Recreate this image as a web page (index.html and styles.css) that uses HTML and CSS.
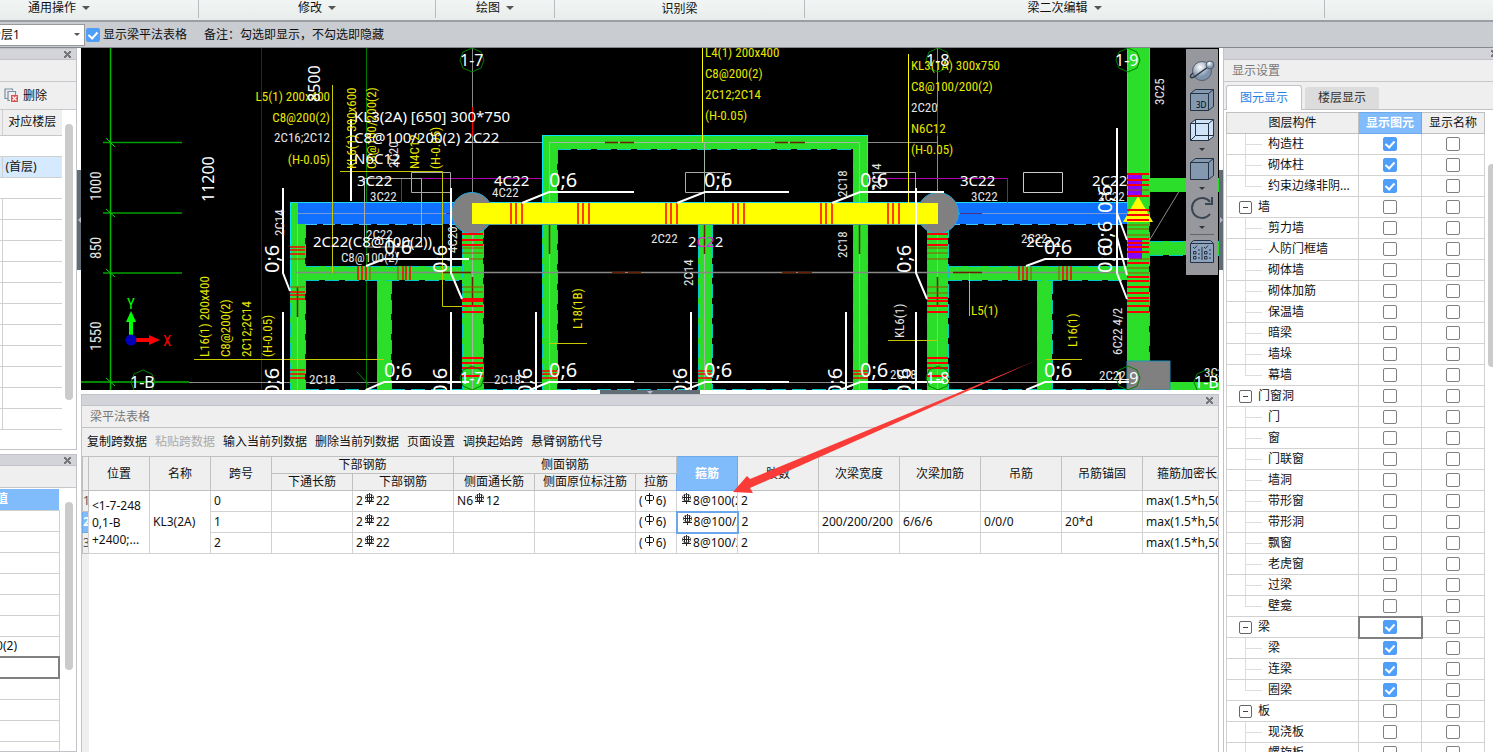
FILE: index.html
```html
<!DOCTYPE html>
<html lang="zh-CN">
<head>
  <meta charset="UTF-8" />
  <meta name="viewport" content="width=device-width, initial-scale=1.0"/>
  <title>梁平法表格</title>
  <link rel="stylesheet" href="styles.css">
</head>
<body>
  <svg class="defs" aria-hidden="true">
    <symbol id="rebar3" viewBox="0 0 11 11"><path d="M5.500 0V11M3.500 1V8M7.500 1V8M1 4.500H10M1 8.500H10" fill="none" stroke="#222"/><path d="M3.500 1.500H7.500L9.500 3V6L7.500 7.500H3.500L1.500 6V3Z" fill="none" stroke="#555" stroke-width="0.800"/></symbol>
    <symbol id="rebar1" viewBox="0 0 11 11"><path d="M5.500 0V11M2.500 2.500H8.500L9.500 3.500V6.500L8.500 7.500H2.500L1.500 6.500V3.500Z" fill="none" stroke="#111"/></symbol>
  </svg>

  <nav class="ribbon">
    <button class="group g-common">通用操作 <i class="caret"></i></button>
    <button class="group g-edit">修改 <i class="caret"></i></button>
    <button class="group g-draw">绘图 <i class="caret"></i></button>
    <button class="group g-detect">识别梁</button>
    <button class="group g-beam">梁二次编辑 <i class="caret"></i></button>
  </nav>

  <div class="options">
    <div class="layer-box">
      <select class="layer" aria-label="分层"><option>分层1</option></select>
      <i class="caret"></i>
    </div>
    <label class="show-table"><input type="checkbox" class="check" checked> 显示梁平法表格</label>
    <span>备注：勾选即显示，不勾选即隐藏</span>
  </div>

  <main class="workspace">
    <aside class="left">
      <section class="dock dock-floor">
        <div class="strip"><button class="close" aria-label="关闭"></button></div>
        <div class="dock-title"></div>
        <div class="dock-tools">
          <button class="delete">
            <svg width="15" height="15" viewBox="0 0 15 15"><path d="M3.500 10.500H1V1H8.500V2.500M6 12.500H4V3.500H11.500V7" fill="none" stroke="#7c8ea0" stroke-width="1.200"/><path d="M7 7H14V14H7Z" fill="#d9534f"/><path d="M8.500 8.500L12.500 12.500M12.500 8.500L8.500 12.500" stroke="#fff" stroke-width="1.200"/></svg>
            删除
          </button>
        </div>
        <div class="list">
          <table class="floors">
            <thead><tr><th></th><th>对应楼层</th></tr></thead>
            <tbody id="floors"></tbody>
          </table>
          <div class="scroll floor-scroll"></div>
        </div>
      </section>
      <section class="dock dock-props">
        <div class="strip"><button class="close" aria-label="关闭"></button></div>
        <div class="dock-title"></div>
        <div class="list">
          <table class="props">
            <thead><tr><th><div class="tail">值</div></th></tr></thead>
            <tbody id="props"></tbody>
          </table>
          <div class="scroll prop-scroll"></div>
        </div>
      </section>
    </aside>

    <div class="split split-left"><div class="grip"><i></i></div></div>

    <section class="center">
      <div class="view">
        <svg class="cad" viewBox="81 48 1138 342" preserveAspectRatio="xMinYMin slice">
          <!-- axes -->
          <g fill="none">
            <path d="M261.500 48V390" stroke="#004000"/>
            <path d="M366.500 48V390" stroke="#007a00"/>
            <path d="M110.500 48V390M81 382H189" stroke="#00b800" stroke-width="1.500"/>
            <path d="M103 142.500H182M103 213H182M103 273H182" stroke="#00a000" stroke-width="1.500"/>
            <path d="M106 138L115 147M106 209L115 217M106 269L115 277M106 378L115 386" stroke="#0d0"/>
            <path d="M189 382.500H1219M472 142.500H938M472.500 48V195M937.500 48V195" stroke="#8a8a8a"/>
            <path d="M472.500 107V136M937.500 107V136" stroke="#f00"/>
            <path d="M1186 180L1149 241" stroke="#8a8a8a"/>
          </g>
          <!-- secondary beams -->
          <g class="beam">
            <path d="M290 203H305V390H290ZM305 266H462V280H305ZM377 280H391V390H377Z"/>
            <path d="M462 224H483V390H462ZM927 224H948V390H927ZM698 224H712V390H698Z"/>
            <path d="M542 135H868V149H542ZM542 149H557V390H542ZM853 149H868V390H853Z"/>
            <path d="M948 266H1127V280H948ZM1037 280H1052V390H1037Z"/>
            <path d="M1149 178H1219V192H1149ZM1149 241H1219V255H1149ZM1170 382H1219V390H1170Z"/>
            <path d="M1127 48H1149V390H1127Z"/>
          </g>
          <g class="edge">
            <path d="M290.500 203V390M305.500 224V266M305.500 280V390M377.500 280V390M391.500 280V390M305 266.500H462M305 280.500H462"/>
            <path d="M462.500 224V390M483.500 224V390M927.500 224V390M948.500 224V390M698.500 224V390M712.500 224V390"/>
            <path d="M557.500 150V390M853.500 150V390M557 149.500H853M542.500 224V390M867.500 224V390"/>
            <path d="M948 266.500H1127M948 280.500H1127M1037.500 280V390M1052.500 280V390M1149.500 192V361M1149 241.500H1219M1149 255.500H1219"/>
            <path d="M305 389.500H377M391 389.500H462M483 389.500H542M557 389.500H698M712 389.500H853M868 389.500H927M948 389.500H1037M1052 389.500H1127"/>
          </g>
          <path d="M542.500 203V135.500H867.500V203M290.500 290V203M1127.500 48V203M1149.500 48V178" fill="none" stroke="#00e8f0"/>
          <g fill="none" stroke="#a0b8a0">
            <path d="M549.500 142V390M704.500 142V390M859.500 142V390M297.500 213V390M472.500 234V390M937.500 234V390M549 142.500H860"/>
            <path d="M296 272.500H1127" stroke="#888" stroke-width="1.500"/>
          </g>
          <path d="M605 142.500H618M620 142.500H634M775 142.500H788M790 142.500H805M612 272.500H625M628 272.500H641M782 272.500H796M798 272.500H812M443 272.500H471M953 272.500H982M297.500 287V317M549.500 225V254M704.500 225V254M859.500 225V254M472.500 277V306M937.500 277V306" fill="none" stroke="#6a2000" stroke-width="1.500"/>
          <!-- main beams -->
          <path d="M297 203H472V224H297ZM938 203H1127V224H938Z" fill="#1070ff"/>
          <path d="M290 202.500H472M483 202.500H928M948 202.500H1127" stroke="#20d8f0" fill="none"/>
          <path d="M305 224.500H462M948 224.500H1127" stroke="#40c8ff" stroke-dasharray="12 6" fill="none"/>
          <path d="M297.500 203V224M298 213.500H472M938 213.500H1127" stroke="#7898d8" fill="none"/>
          <path d="M446 213.500H460M960 213.500H982" stroke="#503080" fill="none"/>
          <circle cx="472" cy="213" r="20.500" fill="#808080" stroke="#20a8e0"/>
          <circle cx="938" cy="213" r="20.500" fill="#808080" stroke="#20a8e0"/>
          <path d="M472 203H938V224H472Z" fill="#ff0"/>
          <path d="M483 224.500H928" stroke="#58a0a0" fill="none"/>
          <path d="M1127 361H1170V390H1127Z" fill="#808080" stroke="#2090c0"/>
          <path d="M1128 175H1142V195H1128ZM1128 238H1142V259H1128Z" fill="#80f"/>
          <path d="M1138 196L1153 222H1123Z" fill="#ff0"/>
          <!-- additional stirrups -->
          <g fill="none" stroke="#f00" stroke-width="2">
            <path d="M511 203V224M516 203V224M522 203V224M578 203V224M583 203V224M589 203V224M666 203V224M671 203V224M677 203V224M733 203V224M738 203V224M744 203V224M821 203V224M826 203V224M832 203V224M888 203V224M893 203V224M899 203V224" stroke-width="1.500"/>
            <path d="M358 266V280M362 266V280M366 266V280M403 266V280M406 266V280M410 266V280M1019 266V280M1023 266V280M1027 266V280M1063 266V280M1067 266V280M1071 266V280" stroke-width="1.500"/>
            <path d="M290 247H305M290 250H305M290 254H305M290 292H305M290 295H305M290 299H305M290 370H305M290 374H305M290 378H305" stroke-width="1.500"/>
            <path d="M462 234H483M462 240H483M462 245H483M462 299H483M462 301H483M462 306H483M462 312H483M462 358H483M462 363H483M462 368H483M462 376H483"/>
            <path d="M927 234H948M927 239H948M927 245H948M927 298H948M927 301H948M927 306H948M927 312H948M927 358H948M927 363H948M927 368H948M927 376H948"/>
            <path d="M542 371H557M542 374H557M542 378H557M698 371H712M698 374H712M698 378H712M853 371H868M853 374H868M853 378H868" stroke-width="1.500"/>
            <path d="M1127 174H1149M1127 180H1149M1127 185H1149M1127 196H1149M1127 210H1149M1127 215H1149M1127 220H1149M1127 239H1149M1127 243H1149M1127 247H1149M1127 252H1149M1127 263H1149M1127 277H1149M1127 281H1149M1127 287H1149M1127 293H1149M1127 298H1149M1127 301H1149M1127 306H1149M1127 312H1149"/>
          </g>
          <path d="M462 248H483M462 253H483M462 259H483M462 287H483M462 292H483M927 248H948M927 253H948M927 259H948M927 287H948M927 293H948M290 259H305M290 287H305M1127 190H1149M1127 225H1149M1127 229H1149M1127 235H1149M1127 259H1149M1127 268H1149M1127 273H1149M370 266V280M398 266V280M1031 266V280M1059 266V280" fill="none" stroke="#a05000"/>
          <!-- frames and leaders -->
          <g fill="none">
            <path d="M401.500 203V178.500H542M868 178.500H1007.500V203" stroke="#b000b0"/>
            <path d="M364.500 247V178.500H421.500V247ZM411.500 172.500H450.500V192.500H411.500ZM685.500 172.500H724.500V192.500H685.500ZM873.500 172.500H915.500V203" stroke="#aaa"/>
            <path d="M1023.500 172.500H1062.500V192.500H1023.500Z" stroke="#ccc"/>
            <path d="M332.500 85V273M340 171.500H442.500V306.500H462M194 359.500H384M550 343.500H587M969.500 273V316M888 340.500H937M1045 359.500H1082" stroke="#c8c800"/>
            <path d="M702.500 48V142M908.500 54V203" stroke="#ff0"/>
            <path d="M351 119V201" stroke="#fff" stroke-width="2"/>
            <g stroke="#fff" stroke-width="2">
              <path d="M283 188V273L290 291M451 188V273L462 299M916 188V273L927 299M1117 128V213L1127 240M1117 213V237L1127 275M1117 237V273L1127 299"/>
              <path d="M283 312V390M451 312V390M536 312V390M691 312V390M846 312V390M916 312V390"/>
              <path d="M522 203L549 192H634M677 203L705 192H789M832 203L860 192H944M366 266L384 259H469M1026 266L1045 259H1129"/>
              <path d="M366 390L384 382H469M530 390L549 382H634M685 390L705 382H789M840 390L860 382H944M1026 390L1045 382H1129"/>
            </g>
          </g>
          <!-- grid bubbles -->
          <g fill="none" stroke="#008000">
            <path id="bubble" d="M472 48L481 52L484 60L481 68L472 72L463 68L460 60L463 52Z"/>
            <use href="#bubble" x="466"/><use href="#bubble" x="656"/>
            <use href="#bubble" y="318"/><use href="#bubble" x="466" y="318"/><use href="#bubble" x="656" y="318"/>
            <use href="#bubble" x="-329" y="322"/><use href="#bubble" x="734" y="322"/>
            <path d="M357 372L369 385"/>
          </g>
          <!-- UCS icon -->
          <path d="M131 340V318" stroke="#0f0" stroke-width="4"/><path d="M131 311L136 322H126Z" fill="#0f0"/>
          <path d="M131 340H150" stroke="#f00" stroke-width="4"/><path d="M160 340L149 345V335Z" fill="#f00"/>
          <circle cx="131" cy="340" r="5.500" fill="#00b"/>
          <text x="127" y="309" class="s axis-y">Y</text><text x="163" y="346" class="s axis-x">X</text>
          <!-- imported drawing text -->
          <g class="s grey">
            <text transform="translate(101 201) rotate(-90)">1000</text>
            <text transform="translate(101 259) rotate(-90)">850</text>
            <text transform="translate(101 351) rotate(-90)">1550</text>
          </g>
          <g class="t yellow">
            <text transform="translate(209 357) rotate(-90)">L16(1) 200x400</text>
            <text transform="translate(230 357) rotate(-90)">C8@200(2)</text>
            <text transform="translate(251 357) rotate(-90)">2C12;2C14</text>
            <text transform="translate(272 357) rotate(-90)">(H-0.05)</text>
            <g text-anchor="end"><text x="330" y="101">L5(1) 200x400</text><text x="330" y="122">C8@200(2)</text><text x="330" y="164">(H-0.05)</text></g>
            <text transform="translate(356 169) rotate(-90)">KL6(1) 300x600</text>
            <text transform="translate(376 169) rotate(-90)">C8@100/200(2)</text>
            <text transform="translate(419 169) rotate(-90)">N4C12</text>
            <text transform="translate(440 169) rotate(-90)">(H-0.05)</text>
            <text x="705" y="57">L4(1) 200x400</text><text x="705" y="78">C8@200(2)</text><text x="705" y="99">2C12;2C14</text><text x="705" y="120">(H-0.05)</text>
            <text x="911" y="70">KL3(1A) 300x750</text><text x="911" y="91">C8@100/200(2)</text><text x="911" y="133">N6C12</text><text x="911" y="154">(H-0.05)</text>
            <text transform="translate(582 329) rotate(-90)">L18(1B)</text>
            <text x="971" y="315">L5(1)</text>
            <text transform="translate(1077 347) rotate(-90)">L16(1)</text>
          </g>
          <g class="t grey">
            <text x="330" y="142" text-anchor="end">2C16;2C12</text><text x="911" y="112">2C20</text>
            <text transform="translate(398 168) rotate(-90)">2C20</text>
            <text transform="translate(284 236) rotate(-90)">2C14</text>
            <text transform="translate(457 253) rotate(-90)">4C20</text>
            <text transform="translate(847 197) rotate(-90)">2C18</text>
            <text transform="translate(881 190) rotate(-90)">2C14</text>
            <text transform="translate(847 258) rotate(-90)">2C18</text>
            <text transform="translate(693 286) rotate(-90)">2C14</text>
            <text transform="translate(1164 105) rotate(-90)">3C25</text>
            <text transform="translate(904 338) rotate(-90)">KL6(1)</text>
            <text transform="translate(1122 355) rotate(-90)">6C22 4/2</text>
            <text x="370" y="201">3C22</text><text x="492" y="197">4C22</text><text x="366" y="239">2C22</text><text x="341" y="262">C8@100(2)</text>
            <text x="651" y="243">2C22</text><text x="971" y="201">3C22</text><text x="1098" y="201">2C22</text><text x="1021" y="243">2C22</text>
            <text x="309" y="384">2C18</text><text x="494" y="384">2C18</text><text x="890" y="379">2C18</text><text x="1099" y="380">2C22</text><text x="1204" y="377">3C25</text>
          </g>
          <g class="m">
            <text class="n" transform="translate(320 102) rotate(-90)">8500</text>
            <text class="n" transform="translate(214 202) rotate(-90)">11200</text>
            <text x="354" y="122">KL3(2A) [650] 300*750</text><text x="354" y="143">C8@100/200(2) 2C22</text><text x="354" y="164">N6C12</text>
            <text x="357" y="186">3C22</text><text x="494" y="186">4C22</text><text x="960" y="186">3C22</text><text x="1092" y="186">2C22</text>
            <text x="313" y="247">2C22(C8@100(2))</text><text x="688" y="247">2<tspan class="pick">C2</tspan>2</text><text x="1026" y="247">2C22</text>
            <text class="n" x="460" y="66">1-7</text><text class="n" x="926" y="66">1-8</text><text class="n" x="1115" y="66">1-9</text>
            <text class="n" x="460" y="384">1-7</text><text class="n" x="926" y="384">1-8</text><text class="n" x="1115" y="384">1-9</text>
            <text class="n" x="130" y="388">1-B</text><text class="n" x="1194" y="388">1-B</text>
          </g>
          <g class="l">
            <text x="549" y="187">0;6</text><text x="704" y="187">0;6</text><text x="860" y="187">0;6</text>
            <text x="384" y="254">0;6</text><text x="1044" y="254">0;6</text>
            <text x="384" y="377">0;6</text><text x="549" y="377">0;6</text><text x="704" y="377">0;6</text><text x="860" y="377">0;6</text><text x="1044" y="377">0;6</text>
            <text transform="translate(279 273) rotate(-90)">0;6</text>
            <text transform="translate(447 273) rotate(-90)">0;6</text>
            <text transform="translate(911 273) rotate(-90)">0;6</text>
            <text transform="translate(1112 273) rotate(-90)">0;6</text>
            <text transform="translate(1112 249) rotate(-90)">0;6</text>
            <text transform="translate(1112 213) rotate(-90)">0;6</text>
            <text transform="translate(279 396) rotate(-90)">0;6</text>
            <text transform="translate(447 396) rotate(-90)">0;6</text>
            <text transform="translate(532 396) rotate(-90)">0;6</text>
            <text transform="translate(687 396) rotate(-90)">0;6</text>
            <text transform="translate(842 396) rotate(-90)">0;6</text>
            <text transform="translate(911 396) rotate(-90)">0;6</text>
          </g>
        </svg>

        <div class="view-tools">
          <button aria-label="动态观察"><svg width="26" height="26" viewBox="0 0 26 26"><defs><radialGradient id="ball" cx="40%" cy="30%"><stop offset="0" stop-color="#fff"/><stop offset="1" stop-color="#7f93ab"/></radialGradient></defs><circle cx="13" cy="14" r="9.500" fill="url(#ball)" stroke="#4d5d70"/><path d="M4 16C0 19 1 22 5 20L19 10" fill="none" stroke="#2f3b4a" stroke-width="1.500"/><circle cx="21" cy="8" r="4" fill="url(#ball)" stroke="#4d5d70"/></svg></button>
          <button aria-label="三维"><svg width="26" height="26" viewBox="0 0 26 26"><path d="M1.500 6.500L6.500 2.500H24.500V19.500L19.500 23.500H1.500Z" fill="#8498b0" stroke="#253242"/><path d="M1.500 6.500H19.500V23.500M19.500 6.500L24.500 2.500" fill="none" stroke="#253242"/><text x="7" y="21" class="cube-text">3D</text></svg></button>
          <button aria-label="线框"><svg width="26" height="26" viewBox="0 0 26 26"><path d="M1.500 6.500L6.500 2.500H24.500V19.500L19.500 23.500H1.500Z" fill="#cfe4fb" stroke="#253242"/><path d="M1.500 6.500H19.500V23.500M19.500 6.500L24.500 2.500M6.500 2.500V18.500H24M6.500 18.500L1.500 23.500" fill="none" stroke="#253242"/></svg></button>
          <i class="caret"></i>
          <button aria-label="实体"><svg width="26" height="26" viewBox="0 0 26 26"><path d="M1.500 6.500L6.500 2.500H24.500V19.500L19.500 23.500H1.500Z" fill="#8498b0" stroke="#253242"/><path d="M1.500 6.500H19.500V23.500M19.500 6.500L24.500 2.500" fill="none" stroke="#253242"/></svg></button>
          <i class="caret"></i>
          <button aria-label="旋转"><svg width="26" height="26" viewBox="0 0 26 26"><path d="M21 19A10 10 0 1 1 21 7" fill="none" stroke="#3a4553" stroke-width="2"/><path d="M23 2V9H16" fill="none" stroke="#3a4553" stroke-width="2"/></svg></button>
          <i class="caret"></i>
          <hr>
          <button aria-label="显示设置"><svg width="26" height="26" viewBox="0 0 26 26"><path d="M1.500 4.500L4.500 1.500H21.500L24.500 4.500V23.500H1.500Z" fill="#8ea3bd" stroke="#253242"/><path d="M2 4.500H24M13 8V21M9 11H11M9 15H11M9 19H11M20 11H22M20 15H22M20 19H22" stroke="#253242"/><path d="M4 8L5.500 9.500L8 6.500M15 8L16.500 9.500L19 6.500M4.500 12.500H7V15H4.500ZM4.500 17.500H7V20H4.500ZM15.500 12.500H18V15H15.500ZM15.500 17.500H18V20H15.500Z" fill="none" stroke="#253242"/></svg></button>
        </div>
      </div>

      <div class="split-row"><div class="grip"><i></i></div></div>

      <div class="panel">
        <div class="strip"><button class="close" aria-label="关闭"></button></div>
        <div class="dock-title">梁平法表格</div>
        <div class="commands">
          <button>复制跨数据</button>
          <button disabled>粘贴跨数据</button>
          <button>输入当前列数据</button>
          <button>删除当前列数据</button>
          <button>页面设置</button>
          <button>调换起始跨</button>
          <button>悬臂钢筋代号</button>
        </div>
        <div class="grid-wrap">
          <table class="grid">
            <colgroup>
              <col class="w6"><col class="w61"><col class="w61"><col class="w61"><col class="w81"><col class="w101"><col class="w81"><col class="w101"><col class="w41"><col class="w61"><col class="w81"><col class="w81"><col class="w81"><col class="w81"><col class="w81"><col class="w101">
            </colgroup>
            <thead>
              <tr>
                <th rowspan="2"></th><th rowspan="2">位置</th><th rowspan="2">名称</th><th rowspan="2">跨号</th>
                <th colspan="2">下部钢筋</th><th colspan="3">侧面钢筋</th>
                <th rowspan="2" class="active">箍筋</th><th rowspan="2">肢数</th><th rowspan="2">次梁宽度</th><th rowspan="2">次梁加筋</th><th rowspan="2">吊筋</th><th rowspan="2">吊筋锚固</th><th rowspan="2">箍筋加密长度</th>
              </tr>
              <tr><th>下通长筋</th><th>下部钢筋</th><th>侧面通长筋</th><th>侧面原位标注筋</th><th>拉筋</th></tr>
            </thead>
            <tbody>
              <tr>
                <th>1</th><td rowspan="3" class="place">&lt;1-7-248<br>0,1-B<br>+2400;...</td><td rowspan="3">KL3(2A)</td><td>0</td><td></td>
                <td>2<svg class="bar"><use href="#rebar3"/></svg>22</td><td>N6<svg class="bar"><use href="#rebar3"/></svg>12</td><td></td>
                <td>(<svg class="bar"><use href="#rebar1"/></svg>6)</td><td><svg class="bar"><use href="#rebar3"/></svg>8@100(2)</td><td>2</td><td></td><td></td><td></td><td></td><td>max(1.5*h,500)</td>
              </tr>
              <tr>
                <th class="active">2</th><td>1</td><td></td>
                <td>2<svg class="bar"><use href="#rebar3"/></svg>22</td><td></td><td></td>
                <td>(<svg class="bar"><use href="#rebar1"/></svg>6)</td><td class="current"><svg class="bar"><use href="#rebar3"/></svg>8@100/200</td><td>2</td><td>200/200/200</td><td>6/6/6</td><td>0/0/0</td><td>20*d</td><td>max(1.5*h,500)</td>
              </tr>
              <tr>
                <th>3</th><td>2</td><td></td>
                <td>2<svg class="bar"><use href="#rebar3"/></svg>22</td><td></td><td></td>
                <td>(<svg class="bar"><use href="#rebar1"/></svg>6)</td><td><svg class="bar"><use href="#rebar3"/></svg>8@100/200</td><td>2</td><td></td><td></td><td></td><td></td><td>max(1.5*h,500)</td>
              </tr>
            </tbody>
          </table>
        </div>
      </div>

      <!-- callout arrow pointing at the stirrup column -->
      <svg class="arrow" width="1138" height="704" viewBox="81 48 1138 704"><path d="M1037 360L750 488L753 493L733 492L747 476L750 479Z" fill="#fa3c38"/></svg>
    </section>

    <div class="split split-right"><div class="grip"><i></i></div></div>

    <aside class="right">
      <div class="strip"><button class="close" aria-label="关闭"></button></div>
      <div class="dock-title">显示设置</div>
      <div class="tabs">
        <button class="tab on">图元显示</button>
        <button class="tab">楼层显示</button>
      </div>
      <div class="tree-wrap">
        <table class="tree">
          <thead><tr><th>图层构件</th><th class="active">显示图元</th><th>显示名称</th></tr></thead>
          <tbody id="tree"></tbody>
        </table>
        <div class="scroll tree-scroll"></div>
      </div>
    </aside>
  </main>

  <script>
    // leading "-" = group, trailing "*" = shown
    const layers = [
      '构造柱*', '砌体柱*', '约束边缘非阴...*',
      '-墙', '剪力墙', '人防门框墙', '砌体墙', '砌体加筋', '保温墙', '暗梁', '墙垛', '幕墙',
      '-门窗洞', '门', '窗', '门联窗', '墙洞', '带形窗', '带形洞', '飘窗', '老虎窗', '过梁', '壁龛',
      '-梁*', '梁*', '连梁*', '圈梁*',
      '-板', '现浇板', '螺旋板'
    ];

    document.getElementById('tree').innerHTML = layers.map((item, i) => {
      const group = item.startsWith('-');
      const on = item.endsWith('*');
      const name = item.replace(/^-|\*$/g, '');
      const last = !group && (layers[i + 1] || '').startsWith('-');
      const current = group && name === '梁' ? ' class="current"' : '';
      const lead = group
        ? `<button class="toggle" aria-label="折叠${name}"></button>`
        : `<i class="branch${last ? ' last' : ''}"></i>`;
      return `<tr><td><div class="node">${lead}<span>${name}</span></div></td>
        <td${current}><input type="checkbox" class="check" aria-label="${name} 显示图元"${on ? ' checked' : ''}></td>
        <td><input type="checkbox" class="check" aria-label="${name} 显示名称"></td></tr>`;
    }).join('');

    const floors = ['', '(首层)', ''].concat(Array(11).fill(null));
    document.getElementById('floors').innerHTML = floors.map(f =>
      `<tr class="${f ? 'selected' : f === '' ? 'plain' : ''}"><td></td><td>${f || ''}</td></tr>`
    ).join('');

    const props = Array(12).fill('');
    props[6] = '200(2)';
    document.getElementById('props').innerHTML = props.map((p, i) =>
      `<tr><td${i === 7 ? ' class="current"' : ''}><div class="tail">${p}</div></td></tr>`
    ).join('');
  </script>
</body>
</html>
```
FILE: styles.css
```css
* {
  box-sizing: border-box;
}
body {
  margin: 0;
  height: 100vh;
  overflow: hidden;
  display: flex;
  flex-direction: column;
  font-family: "Noto Sans", "Noto Sans CJK SC", sans-serif;
  font-size: 12px;
  line-height: 16px;
  color: #111;
  background: #fff;
}
button, select, input {
  font: inherit;
  color: inherit;
  margin: 0;
}
button {
  padding: 0;
  border: none;
  background: none;
  white-space: nowrap;
}
.defs {
  position: absolute;
  width: 0;
  height: 0;
}
.caret {
  display: inline-block;
  border: 4px solid transparent;
  border-top-color: #555;
  border-bottom: none;
}

/* ribbon */
.ribbon {
  flex: none;
  display: flex;
  height: 22px;
  background: linear-gradient(#f2f5f5, #e8eceb);
  border-bottom: 2px solid #9b9fa3;
}
.group {
  height: 18px;
  padding-bottom: 2px;
  display: flex;
  align-items: center;
  justify-content: center;
  gap: 6px;
  border-right: 1px solid #b9bcbe;
}
.g-common { width: 199px; padding-right: 80px; }
.g-edit { width: 237px; }
.g-draw { width: 119px; }
.g-detect { width: 250px; padding-bottom: 0; }
.g-beam { width: 520px; }

.options {
  flex: none;
  display: flex;
  align-items: center;
  height: 26px;
  background: #c9ccd1;
  border-bottom: 1px solid #85888c;
}
.layer-box {
  position: relative;
  width: 85px;
  height: 22px;
  display: flex;
  justify-content: flex-end;
  overflow: hidden;
}
.layer {
  flex: none;
  width: 100px;
  padding: 0 3px;
  appearance: none;
  background: #fff;
  border: 1px solid #999;
  border-radius: 0;
}
.layer-box .caret {
  position: absolute;
  right: 5px;
  top: 9px;
  border-width: 3px;
  border-bottom: none;
}
.show-table {
  display: flex;
  align-items: center;
  gap: 3px;
  margin: 0 17px 0 1px;
}

.check {
  appearance: none;
  display: block;
  width: 14px;
  height: 14px;
  background: #fff;
  border: 1px solid #808080;
  border-radius: 2px;
}
.check:checked {
  background: #4f9ffa;
  border-color: #4f9ffa;
}
.check:checked::after {
  content: "";
  display: block;
  width: 4px;
  height: 7px;
  margin: 1px auto;
  border: solid #fff;
  border-width: 0 2px 2px 0;
  transform: rotate(42deg);
}

/* docks */
.workspace {
  flex: 1;
  min-height: 0;
  display: grid;
  grid-template-columns: 77px 4px minmax(0, 1fr) 4px 270px;
}
.left {
  display: flex;
  flex-direction: column;
  gap: 4px;
  min-height: 0;
}
.dock {
  overflow: hidden;
  border: 1px solid #c2c2c8;
  border-left: none;
}
.dock-floor {
  flex: 0 0 402px;
}
.dock-props {
  flex: 1;
}
.strip {
  height: 11px;
  display: flex;
  align-items: center;
  justify-content: flex-end;
  padding-right: 5px;
  background: #d3d4da;
  border-bottom: 1px solid #c2c2c8;
}
.close {
  width: 7px;
  height: 7px;
  background:
    linear-gradient(45deg, transparent 42%, #777 42% 58%, transparent 58%),
    linear-gradient(-45deg, transparent 42%, #777 42% 58%, transparent 58%);
}
.dock-title {
  height: 22px;
  padding: 3px 8px;
  color: #777;
  background: #efefef;
  border-bottom: 1px solid #c8c8cc;
}
.dock-tools {
  height: 28px;
  padding: 0 4px;
  display: flex;
  background: #efefef;
  border-bottom: 1px solid #c8c8cc;
}
.delete {
  display: flex;
  align-items: center;
  gap: 4px;
}
.list {
  display: flex;
  align-items: flex-start;
  gap: 3px;
}
table {
  border-collapse: collapse;
  table-layout: fixed;
}
th {
  font-weight: normal;
  background: #efefef;
}
th, td {
  padding: 0;
  overflow: hidden;
  white-space: nowrap;
}
.floors {
  width: 62px;
}
.floors th:first-child {
  width: 2px;
}
.floors th {
  height: 25px;
  border: 1px solid #c8c8cc;
  border-width: 0 0 1px;
}
.floors th + th, .floors td + td {
  border-left: 1px solid #d0d0d0;
}
.floors td {
  height: 21px;
  border-bottom: 1px solid #d0d0d0;
  padding-left: 3px;
}
.floors td:first-child {
  padding: 0;
}
.floors .plain td + td {
  border-left: none;
}
.floors .selected td {
  background: #d6eaff;
}
.scroll {
  width: 8px;
  border-radius: 4px;
  background: #cbcbcb;
}
.floor-scroll {
  height: 276px;
  margin-top: 14px;
}
.prop-scroll {
  height: 168px;
  margin-top: 14px;
}
.dock-props .list {
  gap: 5px;
}
.props {
  width: 60px;
  margin-top: 1px;
}
.props th {
  height: 21px;
  background: #80bbfb;
  color: #fff;
  font-weight: bold;
}
.props td {
  height: 21px;
  border: 1px solid #d0d0d0;
  border-left: none;
}
.props td.current {
  border: 2px solid #808080;
  border-left: none;
}
/* the dock is scrolled right, only the end of each text shows */
.tail {
  width: 17px;
  display: flex;
  justify-content: flex-end;
  overflow: hidden;
}
.props th .tail {
  width: 8px;
}

/* splitters */
.split {
  padding-top: 122px;
}
.grip {
  display: flex;
  align-items: center;
  justify-content: center;
  background: #626c76;
}
.split .grip {
  height: 100px;
}
.grip i {
  border: 3px solid transparent;
}
.split-left i {
  border-right-color: #bbc;
  border-left: none;
}
.split-right i {
  border-left-color: #bbc;
  border-right: none;
}
.split-row {
  flex: none;
  height: 4px;
}
.split-row .grip {
  width: 100px;
  height: 4px;
  margin: 0 auto;
}
.split-row i {
  border-top-color: #bbc;
  border-bottom: none;
}

/* model view */
.center {
  position: relative;
  display: flex;
  flex-direction: column;
  min-height: 0;
}
.view {
  position: relative;
  flex: none;
  height: 342px;
  background: #000;
  overflow: hidden;
}
.cad {
  display: block;
  width: 100%;
  height: 100%;
}
.beam {
  fill: #2ade2a;
}
.edge {
  fill: none;
  stroke: #00c8c8;
  stroke-dasharray: 14 6;
}
.cad text {
  fill: #fff;
}
.cad .axis-x {
  fill: #f00;
}
.cad .axis-y {
  fill: #0f0;
}
.cad .pick {
  fill: #e020e0;
}
.cad .yellow text {
  fill: #e6e600;
}
.cad .grey text {
  fill: #e4e4e4;
}
.t {
  font-family: "Liberation Sans Narrow", "Roboto Condensed", "Liberation Sans", sans-serif;
  font-size: 13px;
}
.s {
  font-family: "Liberation Sans Narrow", "Roboto Condensed", "Liberation Sans", sans-serif;
  font-size: 15px;
}
.m {
  font-size: 15px;
}
.m .n {
  font-size: 16px;
}
.l {
  font-size: 20px;
}
.view-tools {
  position: absolute;
  top: 1px;
  right: 1px;
  width: 32px;
  height: 226px;
  padding-top: 8px;
  display: flex;
  flex-direction: column;
  align-items: center;
  gap: 4px;
  background: #96989d;
}
.view-tools button, .view-tools svg {
  display: block;
  width: 26px;
  height: 26px;
}
.view-tools .caret {
  margin: 1px 0;
  border-width: 3px;
  border-bottom: none;
  border-top-color: #333;
}
.view-tools hr {
  width: 24px;
  margin: 0;
  border: none;
  border-top: 1px solid #666;
}
.cube-text {
  font-size: 8px;
}

/* beam table */
.panel {
  flex: 1;
  min-height: 0;
  overflow: hidden;
  border: 1px solid #c2c2c8;
  border-bottom: none;
}
.panel .dock-title {
  border-bottom-color: #c2c2c8;
}
.commands {
  height: 28px;
  padding: 0 5px;
  display: flex;
  gap: 8px;
  background: #efefef;
}
.commands button:disabled {
  color: #aaa;
}
.grid-wrap {
  height: 100%;
  background: linear-gradient(to right, #efefef 7px, #fff 7px);
}
.grid {
  width: 1161px;
}
.w6 { width: 6px; }
.w41 { width: 41px; }
.w61 { width: 61px; }
.w81 { width: 81px; }
.w101 { width: 101px; }
.grid th {
  height: 17px;
  line-height: 14px;
  border: 1px solid #c0c0c0;
}
.grid td {
  height: 21px;
  line-height: 16px;
  padding-left: 3px;
  border: 1px solid #d2d2d2;
}
.grid .place {
  line-height: 17px;
}
.grid tbody th {
  color: #555;
}
.grid .active, .tree .active {
  background: #80bbfb;
  border-color: #6fa8e8;
  color: #fff;
  font-weight: bold;
}
.grid .current {
  border: 2px solid #6ba7ea;
}
.bar {
  width: 11px;
  height: 11px;
  margin: 0 1px;
  vertical-align: 1px;
}
.arrow {
  position: absolute;
  left: 0;
  top: 0;
  pointer-events: none;
}

/* display settings */
.right {
  display: flex;
  flex-direction: column;
  min-height: 0;
  overflow: hidden;
  border-left: 1px solid #c2c2c8;
  background: #efefef;
}
.right .strip {
  flex: none;
  height: 12px;
  margin-right: -10px;
}
.right .dock-title {
  flex: none;
}
.tabs {
  flex: none;
  height: 28px;
  padding: 3px 2px 0;
  display: flex;
  align-items: flex-end;
  gap: 3px;
  border-bottom: 1px solid #c2c2c8;
}
.tab {
  width: 74px;
  height: 22px;
  background: #dcdcdc;
  border-radius: 3px 3px 0 0;
  color: #333;
}
.tab.on {
  width: 76px;
  height: 25px;
  margin-bottom: -1px;
  background: #fff;
  border: 1px solid #c2c2c8;
  border-bottom: none;
  color: #1f7fe8;
}
.tree-wrap {
  flex: 1;
  min-height: 0;
  overflow: hidden;
  padding: 2px 0 0 2px;
  display: flex;
  align-items: flex-start;
  gap: 3px;
  background: #fff;
}
.tree {
  flex: none;
  width: 259px;
}
.tree th {
  height: 21px;
  border: 1px solid #c0c0c0;
}
.tree th:first-child {
  width: 132px;
}
.tree td {
  height: 21px;
  border: 1px solid #d2d2d2;
}
.tree .check {
  margin: 0 auto;
}
.tree .current {
  border: 2px solid #808080;
}
.node {
  height: 20px;
  padding-left: 12px;
  display: flex;
  align-items: center;
}
.toggle {
  width: 13px;
  height: 13px;
  margin-right: 6px;
  border: 1px solid #666;
  border-radius: 2px;
  background: linear-gradient(#444, #444) center / 5px 1px no-repeat #fff;
}
.branch {
  width: 17px;
  height: 20px;
  margin: 0 6px;
  border-left: 1px solid #ddd;
  background: linear-gradient(#ddd, #ddd) center / 100% 1px no-repeat;
}
.branch.last {
  height: 11px;
  margin-bottom: 9px;
  background-position: bottom;
}
.tree-scroll {
  flex: none;
  margin-top: 52px;
  height: 203px;
}
```
